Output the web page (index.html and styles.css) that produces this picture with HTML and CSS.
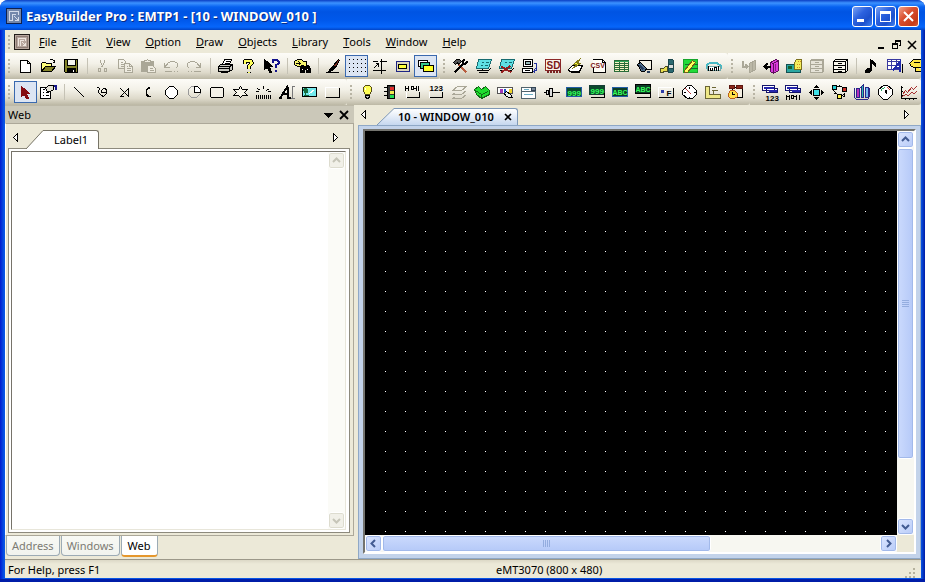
FILE: index.html
```html
<!DOCTYPE html>
<html lang="en">
<head>
<meta charset="utf-8">
<title>EasyBuilder Pro</title>
<link rel="stylesheet" href="styles.css">
</head>
<body>
<div class="window">
<header class="titlebar">
  <svg class="appicon" viewBox="-.5 -.5 16 16" aria-hidden="true"><rect x="0" y="0" width="15" height="15" rx="1" fill="#7487ab" stroke="#10214e"/><path d="M3 12V3H12V6M6 12V6H9M3 12H6M8 8L12 12M12 8V12H8" stroke="#d5dbea" stroke-width="1.4"/></svg>
  <h1>EasyBuilder Pro : EMTP1 - [10 - WINDOW_010 ]</h1>
  <button class="cap" aria-label="Minimize"><svg viewBox="0 0 19 19"><path d="M4 13.5H11" stroke="#fff" stroke-width="3"/></svg></button>
  <button class="cap" aria-label="Maximize"><svg viewBox="0 0 19 19"><path d="M4.5 4V14.5H14.5V4M4 5.5H15" stroke="#fff" /><path d="M4 5H15" stroke="#fff" stroke-width="3"/></svg></button>
  <button class="cap close" aria-label="Close"><svg class="smooth" viewBox="0 0 19 19"><path d="M5 5L14 14M14 5L5 14" stroke="#fff" stroke-width="2"/></svg></button>
</header>

<nav class="menubar">
  <span class="grip"></span>
  <svg class="appicon" viewBox="-.5 -.5 16 16" aria-hidden="true"><rect x="0" y="0" width="15" height="15" rx="1" fill="#b8a79e" stroke="#211c18"/><rect x="2" y="2" width="11" height="11" stroke="#8d7c75"/><path d="M4 11V4H11V6M6 11V6H9M8 8L11 11M11 8V11H8" stroke="#eee5df" stroke-width="1.3"/></svg>
  <button><u>F</u>ile</button><button><u>E</u>dit</button><button><u>V</u>iew</button><button><u>O</u>ption</button><button><u>D</u>raw</button><button><u>O</u>bjects</button><button><u>L</u>ibrary</button><button><u>T</u>ools</button><button><u>W</u>indow</button><button><u>H</u>elp</button>
  <span class="docbuttons">
    <button aria-label="Minimize document"><svg viewBox="0 0 10 10"><path d="M1 8H7" stroke-width="2"/></svg></button>
    <button aria-label="Restore document"><svg viewBox="-.5 -.5 10 10"><path d="M3 3V0H8V5H6M3 1H8M0 3H5V8H0ZM0 4H5"/></svg></button>
    <button aria-label="Close document"><svg class="smooth" viewBox="0 0 10 10"><path d="M1 1L9 9M9 1L1 9" stroke-width="1.6"/></svg></button>
  </span>
</nav>

<div class="toolrow">
  <div class="toolbar" role="toolbar" aria-label="Standard">
    <span class="grip"></span>
    <button class="tool" aria-label="New"><svg viewBox="-.5 -.5 21 20"><path fill="#fff" d="M5 4H12L15 7V16H5ZM12 4V7H15"/></svg></button>
    <button class="tool" aria-label="Open"><svg viewBox="-.5 -.5 21 20"><path fill="#ffff7b" d="M3 15V7L4 6H7L8 7H13V10H7L3 15"/><path fill="#84842a" d="M3 15L7 10H17L13 15Z"/><path d="M11 4L12 3H14L16 5M16 3V6H14"/></svg></button>
    <button class="tool" aria-label="Save"><svg viewBox="-.5 -.5 21 20"><path fill="#84842a" d="M3 3H16V16H4L3 15Z"/><path fill="#f4f4ee" d="M6 3H14V9H6Z"/><path fill="#000" d="M6 12H14V16H6Z"/><path stroke="#fff" d="M12 13V15M15 4V4"/></svg></button>
    <span class="sep"></span>
    <button class="tool off" aria-label="Cut" disabled><svg viewBox="-.5 -.5 21 20"><path d="M8 3V6L11 11M12 3V6L9 11M6 12H8V15H6ZM12 12H14V15H12Z"/></svg></button>
    <button class="tool off" aria-label="Copy" disabled><svg viewBox="-.5 -.5 21 20"><path d="M3 3H8L10 5V12H3ZM5 6H7M5 8H8M5 10H8"/><path fill="#eeebe0" d="M9 7H14L17 10V16H9ZM14 7V10H17M11 10H12M11 12H15M11 14H15"/></svg></button>
    <button class="tool off" aria-label="Paste" disabled><svg viewBox="-.5 -.5 21 20"><path fill="#aaa797" d="M3 5H15V15H3Z"/><path fill="#eeebe0" d="M6 6V4H8L9 3L10 4H12V6ZM9 9H14L17 12V16H9ZM11 12H14M11 14H15"/></svg></button>
    <button class="tool off" aria-label="Undo" disabled><svg viewBox="-.5 -.5 21 20"><path d="M3 6V11H8M3 11L7 6L10 5H13L16 7V10L14 12M3 15H10M12 15H13M15 15H16"/></svg></button>
    <button class="tool off" aria-label="Redo" disabled><svg viewBox="-.5 -.5 21 20"><path d="M16 6V11H11M16 11L12 6L9 5H6L3 7V10L5 12M3 15H4M6 15H7M9 15H16"/></svg></button>
    <span class="sep"></span>
    <button class="tool" aria-label="Print"><svg viewBox="-.5 -.5 21 20"><path fill="#fff" d="M7 8L9 3H16L14 8Z"/><path d="M10 5H14M9 7H13"/><path fill="#c8c8c0" d="M3 10L5 8H17L15 10ZM3 10H14V15H3ZM14 10L17 8V13L14 15"/><path stroke="#e5dd25" d="M9 12H11"/><path d="M3 12H14M5 16H12L14 14" /></svg></button>
    <button class="tool" aria-label="Help"><svg viewBox="-.5 -.5 21 20"><path stroke-width="4" d="M6 7V5L8 4H12L13 6V7L10 10V12M10 15V16"/><path stroke="#ffff5a" stroke-width="2" d="M6 7V5L8 4H12L13 6V7L10 10V12M10 15V16"/></svg></button>
    <button class="tool" aria-label="Context help"><svg viewBox="-.5 -.5 21 20"><path fill="#000" d="M3 3V13L6 11L8 16H10L8 10H11Z"/><path stroke="#12128c" stroke-width="2" d="M11 6V4L13 3H15L17 5V7L14 9V11M14 13V15"/></svg></button>
    <span class="sep"></span>
    <button class="tool" aria-label="Find"><svg viewBox="-.5 -.5 21 20"><path fill="#f5f36c" d="M2 5L5 3H9L11 5H14V10H5L2 8Z"/><path d="M3 7H8L6 5M8 7L6 9"/><path fill="#000" d="M9 9H11V11H14V9H16L18 12V16H14V13H12V16H8V12Z"/><path stroke="#fff" d="M10 12V13M15 12V13"/></svg></button>
    <span class="sep"></span>
    <button class="tool" aria-label="Pen"><svg viewBox="-.5 -.5 21 20"><path d="M2 16H15"/><path fill="#7c2d20" d="M10 9L15 3L16 4L12 11Z"/><path fill="#000" d="M10 9L12 11L9 14L5 15L8 11Z"/></svg></button>
    <button class="tool on" aria-label="Grid"><svg viewBox="-.5 -.5 21 20"><g stroke-dasharray="1 3"><path d="M2 3H19M2 7H19M2 11H19M2 15H19"/></g></svg></button>
    <button class="tool" aria-label="Snap"><svg viewBox="-.5 -.5 21 20"><path d="M3 5H8M10 5H17M12 2V17M3 14H16M4 12L9 7M6 7H9V10"/></svg></button>
    <button class="tool" aria-label="Frame"><svg viewBox="-.5 -.5 21 20"><path fill="#ded8bd" stroke="#1d2485" d="M4 5H17V15H4Z"/><path fill="#ffff3c" d="M6 8H14V12H6Z"/></svg></button>
    <button class="tool on" aria-label="Overlap"><svg viewBox="-.5 -.5 21 20"><path fill="#fff" d="M3 4H12V10H3Z"/><path fill="#35c98b" d="M5 6H14V12H5Z"/><path fill="#ffff24" d="M8 9H18V15H8Z"/></svg></button>
  </div>
  <div class="toolbar" role="toolbar" aria-label="Project">
    <span class="grip"></span>
    <button class="tool" aria-label="System parameters"><svg viewBox="-.5 -.5 21 20"><path stroke="#b95e3f" stroke-width="2" d="M8 8L16 16"/><path fill="#555" d="M3 6L6 3H9L11 5L8 8L7 6L5 8Z"/><path stroke-width="2" d="M14 3L12 5L13 7H15L17 5M12 8L4 16"/></svg></button>
    <button class="tool" aria-label="Compile"><svg viewBox="-.5 -.5 21 20"><path fill="#5fe0e4" stroke="#176b70" d="M5 3H18L15 12H3Z"/><path stroke="#176b70" d="M8 6H10M12 6H15M7 9H9M11 9H14"/><path d="M9 12V14M3 14H15L17 12M5 16H14"/></svg></button>
    <button class="tool" aria-label="Stop"><svg viewBox="-.5 -.5 21 20"><path fill="#5fe0e4" stroke="#176b70" d="M5 3H18L15 12H3Z"/><path stroke="#176b70" d="M8 6H10M12 6H15"/><path d="M3 14H15L17 12"/><path stroke="#942020" stroke-width="2" d="M5 10L15 16M14 9L5 16"/></svg></button>
    <button class="tool" aria-label="Download"><svg viewBox="-.5 -.5 21 20"><path fill="#fff" d="M4 3H13V10H4ZM3 12H13V16H3Z"/><path fill="#9bb" d="M6 5H11V8H6Z"/><path stroke="#2733a1" d="M14 7H17V14L14 15M16 12L14 15L16 16"/><path d="M5 14H10"/></svg></button>
    <button class="tool" aria-label="SD card"><svg viewBox="-.5 -.5 21 20"><rect x="3" y="3" width="15" height="11" stroke="#8c2828" fill="#f9f3e9"/><path stroke="#7a2222" stroke-dasharray="2 1" stroke-width="3" d="M4 15H18"/><text x="4" y="12" class="t10 red">SD</text></svg></button>
    <button class="tool" aria-label="Lightning"><svg viewBox="-.5 -.5 21 20"><path fill="#fff" d="M3 13L7 9H17L14 15H4Z"/><path d="M5 16H14"/><path fill="#ffff3a" stroke="#807a18" d="M15 2L8 8H11L7 12L15 7H12Z"/></svg></button>
    <button class="tool" aria-label="CSV"><svg viewBox="-.5 -.5 21 20"><path fill="#fffdf5" d="M4 3H14L17 6V16H5V10"/><path d="M14 3V6H17"/><text x="2" y="11" class="t7 red">CSV</text></svg></button>
    <button class="tool" aria-label="Table"><svg viewBox="-.5 -.5 21 20"><path fill="#f7f3c3" stroke="#286b38" d="M3 4H17V15H3ZM3 7H17M3 9H17M3 11H17M3 13H17M8 4V15M13 4V15"/><path stroke="#31a65b" d="M3 5H17"/></svg></button>
    <button class="tool" aria-label="Screen"><svg viewBox="-.5 -.5 21 20"><path fill="#f6f4e6" d="M5 4H17V13H9L5 9Z"/><path fill="#51718e" d="M3 8L6 6L12 12L10 15H7Z"/><path stroke="#283d5b" stroke-width="2" d="M5 9L9 13M12 15H15"/></svg></button>
    <button class="tool" aria-label="USB"><svg viewBox="-.5 -.5 21 20"><path fill="#2a6870" stroke="#1b474d" d="M11 3H15L16 4V15L15 16H11Z"/><path fill="#d8dddd" stroke="#1b474d" d="M11 8H16V12H11Z"/><path fill="#e8de4e" stroke="#4c4a24" d="M3 12H6L8 10H10V15H7L5 16H3Z"/></svg></button>
    <button class="tool" aria-label="Edit green"><svg viewBox="-.5 -.5 21 20"><path fill="#20db38" stroke="#16a52b" d="M3 3H17V16H3Z"/><path stroke="#146b2b" d="M4 8H17M4 12H17"/><path fill="#ffff5b" stroke="#706018" d="M4 14L12 4L15 6L7 16H4Z"/></svg></button>
    <button class="tool" aria-label="Station"><svg viewBox="-.5 -.5 21 20"><path stroke="#48b9c4" stroke-width="2" d="M3 12V9L7 6H13L17 9V12"/><path fill="#fff" stroke="#76a7a8" d="M4 10H17V14H4Z"/><path d="M5 9V14M7 11V14H9V11M11 14V11H13V14M15 9V14"/></svg></button>
  </div>
  <div class="toolbar grow" role="toolbar" aria-label="Libraries">
    <span class="grip"></span>
    <button class="tool off" aria-label="Import" disabled><svg viewBox="-.5 -.5 21 20"><path fill="#bbb8a7" d="M11 7L14 5V15L11 16ZM14 5L17 4V13L14 15"/><path stroke-width="2" d="M4 4V10H9M7 8L9 10L7 12"/></svg></button>
    <button class="tool" aria-label="Export"><svg viewBox="-.5 -.5 21 20"><path fill="#d93bdc" stroke="#5c0d5c" d="M9 6L14 3L17 4V14L12 17L9 15ZM9 6L12 7V17M12 7L17 4"/><path stroke="#8d168d" d="M14 7V14"/><path stroke-width="2" d="M9 10H3M6 7L3 10L6 13"/></svg></button>
    <button class="tool" aria-label="Picture library"><svg viewBox="-.5 -.5 21 20"><path fill="#2aa6a1" stroke="#134f52" d="M2 8H16V16H2Z"/><path fill="#13602d" stroke="#13602d" d="M4 10H7V12H4Z"/><path fill="#f4ee5c" stroke="#7c701f" d="M12 3H17V13H10V6Z"/><path stroke="#d18b25" stroke-dasharray="1 1" d="M13 5H16M12 8H16M12 11H16"/></svg></button>
    <button class="tool off" aria-label="Cabinet" disabled><svg viewBox="-.5 -.5 21 20"><path fill="#e6e3d8" d="M3 4L5 3H16V14L15 16H3ZM3 4H15V16M3 8H15M3 12H15M7 6H11M7 10H11M7 14H11"/></svg></button>
    <button class="tool" aria-label="Archive"><svg viewBox="-.5 -.5 21 20"><path fill="#f8f6ec" d="M3 5L5 3H17V14L15 16H3ZM3 5H15V16M3 9H15M3 13H15M7 7H11M7 11H11M7 15H11M15 5L17 3"/></svg></button>
    <span class="sep"></span>
    <button class="tool" aria-label="Sound"><svg viewBox="-.5 -.5 21 20"><path fill="#000" d="M9 3V12H6L4 14V16H8L10 14V6L14 10V7Z"/></svg></button>
    <button class="tool" aria-label="Tag table"><svg viewBox="-.5 -.5 21 20"><path fill="#fff" stroke="#3939a0" d="M3 3H16V13H3ZM3 5H16M3 9H16M7 3V13M12 3V13"/><path stroke="#202aab" stroke-width="2" d="M8 14L15 6V15M11 11H15"/><path d="M18 7V16"/></svg></button>
    <button class="tool" aria-label="Label"><svg viewBox="-.5 -.5 21 20"><path fill="#ffe745" d="M2 7L6 3H20V11H7L4 10ZM8 11V15H20"/><path d="M6 6H12"/></svg></button>
  </div>
</div>

<div class="toolrow">
  <div class="toolbar" role="toolbar" aria-label="Draw">
    <span class="grip"></span>
    <button class="tool on" aria-label="Select"><svg viewBox="-.5 -.5 21 20"><path fill="#850d13" stroke="#850d13" d="M6 4V14L9 12L11 16H13L11 11H14Z"/></svg></button>
    <button class="tool" aria-label="Properties"><svg viewBox="-.5 -.5 21 20"><path fill="#fff" d="M2 5H12V16H2Z"/><path d="M4 7H6M4 10H5M7 10H10M4 13H5M7 13H10"/><path fill="#e5e2d7" d="M7 6L10 3H15V7L12 9H9Z"/><path stroke="#17178a" stroke-width="2" d="M15 3H17V7"/></svg></button>
    <span class="sep"></span>
    <button class="tool" aria-label="Line"><svg viewBox="-.5 -.5 21 20"><path d="M5 5L15 15"/></svg></button>
    <button class="tool" aria-label="Curve"><svg viewBox="-.5 -.5 21 20"><path d="M4 5H6L7 6L6 9V10L9 13L11 14L14 11V8L13 6H11L9 8V10H13"/></svg></button>
    <button class="tool" aria-label="Polyline"><svg viewBox="-.5 -.5 21 20"><path d="M5 6L13 14V6L5 14H8"/></svg></button>
    <button class="tool" aria-label="Arc"><svg viewBox="-.5 -.5 21 20"><path stroke-width="1.6" d="M12 5L9 6L8 8V12L10 14H12"/></svg></button>
    <button class="tool" aria-label="Ellipse"><svg viewBox="-.5 -.5 21 20"><path fill="#fff" d="M8 4H12L16 8V12L12 16H8L4 12V8Z"/></svg></button>
    <button class="tool" aria-label="Pie"><svg viewBox="-.5 -.5 21 20"><path stroke="#999" d="M10 4H7L4 7V12L7 15H12L16 11"/><path fill="#fff" d="M10 4H13L16 7V10H10Z"/></svg></button>
    <button class="tool" aria-label="Rectangle"><svg viewBox="-.5 -.5 21 20"><path fill="#f4f1e8" d="M4 5H15L16 6V14L15 15H4L3 14V6Z"/></svg></button>
    <button class="tool" aria-label="Polygon"><svg viewBox="-.5 -.5 21 20"><path fill="#f8f5ea" d="M3 7H8L10 4L12 7H17L14 10L17 13H12L10 15L8 13H3L6 10Z"/></svg></button>
    <button class="tool" aria-label="Scale"><svg viewBox="-.5 -.5 21 20"><path d="M3 12V16M5 12V16M7 12V16M9 12V16M11 12V16M13 12V16M15 12V16M17 12V16M10 3V6M4 6L7 8M16 6L13 8M2 9H5M14 9H17"/></svg></button>
    <button class="tool" aria-label="Text"><svg viewBox="-.5 -.5 21 20"><path stroke-width="2" d="M2 15H5M4 15L11 4L12 15M10 15H14M7 11H12"/><path stroke="#777" d="M15 4H18M16 4V16M14 16H18"/></svg></button>
    <button class="tool" aria-label="Picture"><svg viewBox="-.5 -.5 21 20"><path fill="#73e9ec" d="M3 5H17V14H3Z"/><path fill="#176d3e" stroke="#176d3e" d="M4 7L6 6L8 7V10H5ZM6 10V13M4 13H9"/><path stroke="#fff" d="M10 11L15 7"/></svg></button>
    <button class="tool" aria-label="Panel"><svg viewBox="-.5 -.5 21 20"><path stroke="#fff" d="M3 14V5H15"/><path stroke-width="1.5" d="M3 15H17V5"/></svg></button>
  </div>
  <div class="toolbar" role="toolbar" aria-label="Objects">
    <span class="grip"></span>
    <button class="tool" aria-label="Bit lamp"><svg viewBox="-.5 -.5 21 20"><path fill="#ffff55" stroke="#554c16" d="M8 3H12L14 5V9L12 12H8L6 9V5Z"/><path fill="#bbb" d="M8 13H12V15L10 16L8 15Z"/><path stroke="#fff" d="M8 5V7"/></svg></button>
    <button class="tool" aria-label="Word lamp"><svg viewBox="-.5 -.5 21 20"><path fill="#333" d="M7 3H14V16H7Z"/><g stroke="none"><rect x="9" y="4" width="4" height="3" fill="#e02d2d"/><rect x="9" y="8" width="4" height="3" fill="#efe84e"/><rect x="9" y="12" width="4" height="3" fill="#20dd54"/></g><path d="M3 5H6M3 9H6M3 13H6"/></svg></button>
    <button class="tool" aria-label="Set bit"><svg viewBox="-.5 -.5 21 20"><path d="M2 3V8M2 6H5M5 3V8M8 4H10V7H8ZM10 6H13M13 3V8M15 3V8"/><path fill="#f9f7ef" stroke="#fff" d="M3 15V9"/><path d="M3 15H16V9"/></svg></button>
    <button class="tool" aria-label="Set word"><svg viewBox="-.5 -.5 21 20"><text x="3" y="8" class="t8">123</text><path stroke="#fff" d="M3 9V15"/><path stroke-width="1.5" d="M3 15H16V9"/></svg></button>
    <button class="tool off" aria-label="Layers" disabled><svg viewBox="-.5 -.5 21 20"><path d="M3 8L8 4H17L12 8ZM3 12L6 10M17 8L12 12H3M3 16L6 14M17 12L12 16H3"/></svg></button>
    <button class="tool" aria-label="Toggle switch"><svg viewBox="-.5 -.5 21 20"><path fill="#20de2f" stroke="#126916" d="M2 7L6 4L9 7L13 4L17 8V12L9 16L4 12Z"/><path stroke="#126916" d="M3 8L9 12L16 9M9 12V16"/></svg></button>
    <button class="tool" aria-label="Multi-state"><svg viewBox="-.5 -.5 21 20"><path fill="#fff" stroke="#555" d="M2 5H17V11H2Z"/><g stroke="none"><rect x="4" y="6" width="3" height="4" fill="#a238b8"/><rect x="8" y="6" width="2" height="4" fill="#1f52c2"/><rect x="13" y="6" width="3" height="4" fill="#efd327"/></g><path fill="#eee" d="M9 11L11 9L15 12L17 15H13L10 13Z"/></svg></button>
    <button class="tool" aria-label="Option list"><svg viewBox="-.5 -.5 21 20"><path fill="#fff" stroke="#52636c" d="M3 5H17V16H3ZM3 9H17"/><path stroke="#6aadc3" d="M5 7H10M5 12H8M8 12H14"/><path fill="#789" stroke="#345" d="M13 5H17V8H13Z"/></svg></button>
    <button class="tool" aria-label="Slider"><svg viewBox="-.5 -.5 21 20"><path d="M2 10H18"/><path fill="#ddd" d="M8 6H11V14H8ZM5 8H7V12H5Z"/></svg></button>
    <button class="tool" aria-label="Numeric display"><svg viewBox="-.5 -.5 21 20"><rect x="2" y="5" width="15" height="9" fill="#0c4a2c" stroke="#235ca5"/><text x="3" y="13" class="t8 neon">999</text></svg></button>
    <button class="tool" aria-label="Numeric input"><svg viewBox="-.5 -.5 21 20"><rect x="2" y="3" width="15" height="9" fill="#0c4a2c" stroke="#163d35"/><text x="3" y="11" class="t8 neon">999</text><path d="M3 15H17V10"/></svg></button>
    <button class="tool" aria-label="Text display"><svg viewBox="-.5 -.5 21 20"><rect x="2" y="5" width="15" height="9" fill="#0c3d24" stroke="#235ca5"/><text x="2" y="12" class="t7 neon">ABC</text></svg></button>
    <button class="tool" aria-label="Text input"><svg viewBox="-.5 -.5 21 20"><rect x="2" y="2" width="15" height="9" fill="#0c3d24"/><text x="2" y="9" class="t7 neon">ABC</text><path d="M3 15H17V10"/></svg></button>
    <button class="tool" aria-label="Function key"><svg viewBox="-.5 -.5 21 20"><path stroke="#fff" d="M2 14V5H15"/><path stroke-width="1.5" d="M2 15H17V5"/><path stroke="#2c3ba8" stroke-width="3" d="M4 9H7"/><text x="10" y="13" class="t8">F</text></svg></button>
    <button class="tool" aria-label="Meter"><svg viewBox="-.5 -.5 21 20"><path fill="#fff" d="M8 3H12L17 8V12L13 16H8L3 12V8Z"/><path d="M10 4V6M4 10H6M14 10H16M10 14V16"/><path stroke="#b73434" d="M6 6L12 12"/></svg></button>
    <button class="tool" aria-label="Bar graph"><svg viewBox="-.5 -.5 21 20"><path stroke="#6a6535" stroke-width="5" d="M5 3V14H18"/><path stroke="#eee887" stroke-width="3" d="M5 4V14H17"/><path stroke="#6a6535" d="M9 5H13M9 8H15M11 8V11"/></svg></button>
    <button class="tool" aria-label="Scheduler"><svg viewBox="-.5 -.5 21 20"><path fill="#f4efe2" d="M7 5H17V15H9Z"/><path fill="#8e291c" stroke="#5d1810" d="M4 3H9V6H4ZM11 3H17V6H11Z"/><path fill="#ffdf48" stroke="#bb5e1c" d="M5 8H9L12 11V14L9 16H5L3 14V11Z"/><path d="M7 9V12H9"/></svg></button>
  </div>
  <div class="toolbar grow" role="toolbar" aria-label="Data">
    <span class="grip"></span>
    <button class="tool" aria-label="Indirect numeric"><svg viewBox="-.5 -.5 21 20"><path fill="#fff" stroke="#15156b" d="M2 3H14V8H2ZM6 6H17V10H6Z"/><path stroke="#2525ad" stroke-width="2" d="M3 5H13M8 8H16"/><text x="5" y="18" class="t8">123</text></svg></button>
    <button class="tool" aria-label="Indirect bit"><svg viewBox="-.5 -.5 21 20"><path fill="#fff" stroke="#15156b" d="M2 3H14V8H2ZM6 6H17V10H6Z"/><path stroke="#2525ad" stroke-width="2" d="M3 5H13M8 8H16"/><path d="M3 12V17M3 14H6M6 12V17M8 13H10V16H8ZM10 14H13M13 12V17M16 12V17"/></svg></button>
    <button class="tool" aria-label="Moving shape"><svg viewBox="-.5 -.5 21 20"><path fill="#3fe0e6" d="M7 7H13V13H7Z"/><path fill="#000" d="M8 5L10 3L12 5ZM8 15L10 17L12 15ZM5 8L3 10L5 12ZM15 8L17 10L15 12Z"/></svg></button>
    <button class="tool" aria-label="Animation"><svg viewBox="-.5 -.5 21 20"><path fill="#24cbd1" d="M3 3H7V7H3Z"/><path fill="#ca3029" d="M13 5H17V9H13Z"/><path fill="#fff346" d="M8 12H12V16H8Z"/><path d="M7 4H12M10 3L12 5M15 10V14H13M4 8L8 12M4 11H7M14 12L12 14"/></svg></button>
    <button class="tool" aria-label="Trend bars"><svg viewBox="-.5 -.5 21 20"><path fill="#b52dbd" stroke="#262688" d="M4 6H7V15H4Z"/><path fill="#2abda8" stroke="#262688" d="M9 4L11 2V15H9Z"/><path fill="#73b7ef" stroke="#262688" d="M13 5H16V15H13Z"/><path stroke="#262688" d="M2 5V15L4 17H15L17 14V5M7 6L9 4"/></svg></button>
    <button class="tool" aria-label="Gauge"><svg viewBox="-.5 -.5 21 20"><path fill="#fff" d="M8 3H12L17 7V12L12 17H8L3 12V7Z"/><path stroke="#25a05c" d="M5 9L7 6L10 5"/><path stroke="#d04a37" d="M12 5L15 8"/><path stroke-width="2" d="M10 11L11 8"/></svg></button>
    <button class="tool" aria-label="Trend chart"><svg viewBox="-.5 -.5 21 20"><path d="M3 3V16H18M2 5H4M2 9H4M2 13H4M7 15V17M11 15V17M15 15V17"/><path stroke="#a93232" d="M4 12L7 8L9 10L13 5L15 7L18 4M4 14L7 12L10 13L13 10L16 11L18 9"/></svg></button>
  </div>
</div>

<main class="workspace">
  <aside class="dock">
    <header class="dockhead"><h2>Web</h2>
      <button aria-label="Panel menu"><svg viewBox="0 0 10 10"><path fill="#000" stroke="none" d="M0 3H10L5 8Z"/></svg></button>
      <button aria-label="Close panel"><svg class="smooth" viewBox="0 0 10 10"><path d="M1 1L9 9M9 1L1 9" stroke-width="1.8"/></svg></button>
    </header>
    <div class="dockframe">
      <div class="strip">
        <button class="arrow" aria-label="Previous label"><svg viewBox="-.5 -.5 6 10"><path fill="#fff" d="M4 0V8L0 4Z"/></svg></button>
        <button class="tab plain"><svg class="slant" viewBox="0 0 18 19"><path fill="#fff" stroke="none" d="M0 19L17 1H18V19Z"/><path stroke="#777467" d="M0 19L17 .5H18"/></svg><span>Label1</span></button>
        <button class="arrow last" aria-label="Next label"><svg viewBox="-.5 -.5 6 10"><path fill="#fff" d="M0 0V8L4 4Z"/></svg></button>
      </div>
      <div class="listframe"><div class="list">
        <div class="vscroll idle">
          <button disabled aria-label="Scroll list up"><svg class="smooth" viewBox="0 0 9 9"><path d="M1 6L4.500 2.500L8 6"/></svg></button>
          <button disabled aria-label="Scroll list down"><svg class="smooth" viewBox="0 0 9 9"><path d="M1 3L4.500 6.500L8 3"/></svg></button>
        </div>
      </div></div>
    </div>
    <div class="docktabs"><button>Address</button><button>Windows</button><button class="current">Web</button></div>
  </aside>

  <section class="editor">
    <div class="strip">
      <button class="arrow" aria-label="Previous window"><svg viewBox="-.5 -.5 6 10"><path fill="#fff" d="M4 0V8L0 4Z"/></svg></button>
      <div class="tab blue"><svg class="slant" viewBox="0 0 18 17" aria-hidden="true"><defs><linearGradient id="tabfill" x2="0" y2="1"><stop stop-color="#fff"/><stop offset="1" stop-color="#c6d7ef"/></linearGradient></defs><path fill="url(#tabfill)" stroke="none" d="M0 17L17 1H18V17Z"/><path stroke="#7d98b8" d="M0 17L17 .5H18"/></svg><span>10 - WINDOW_010<button aria-label="Close window"><svg class="smooth" viewBox="0 0 8 8"><path d="M1 1L7 7M7 1L1 7" stroke-width="1.6"/></svg></button></span></div>
      <button class="arrow last" aria-label="Next window"><svg viewBox="-.5 -.5 6 10"><path fill="#fff" d="M0 0V8L4 4Z"/></svg></button>
    </div>
    <div class="frame"><div class="view">
      <svg class="canvas" aria-label="Design canvas"><defs><pattern id="grid" x="20" y="20" width="20" height="20" patternUnits="userSpaceOnUse"><rect width="1" height="1" fill="#fff" stroke="none"/></pattern></defs><rect x="20" y="20" width="100%" height="100%" fill="url(#grid)" stroke="none"/></svg>
      <div class="vscroll">
        <button aria-label="Scroll up"><svg class="smooth" viewBox="0 0 9 9"><path d="M1 6L4.500 2.500L8 6"/></svg></button>
        <span class="track"><span class="thumb"></span></span>
        <button aria-label="Scroll down"><svg class="smooth" viewBox="0 0 9 9"><path d="M1 3L4.500 6.500L8 3"/></svg></button>
      </div>
      <div class="hscroll">
        <button aria-label="Scroll left"><svg class="smooth" viewBox="0 0 9 9"><path d="M6 1L2.500 4.500L6 8"/></svg></button>
        <span class="track"><span class="thumb"></span></span>
        <button aria-label="Scroll right"><svg class="smooth" viewBox="0 0 9 9"><path d="M3 1L6.500 4.500L3 8"/></svg></button>
      </div>
    </div></div>
  </section>
</main>

<footer class="status">
  <span>For Help, press F1</span><span>eMT3070 (800 x 480)</span>
  <svg class="sizer" viewBox="0 0 12 12" aria-hidden="true"><path stroke="#b5b19d" stroke-width="2" stroke-dasharray="2 2" d="M8 3H10M4 7H10M0 11H10"/></svg>
</footer>
</div>
</body>
</html>
```
FILE: styles.css
```css
* { box-sizing: border-box; }
body {
  margin: 0;
  background: #fff;
  color: #000;
  font: 11px/14px "Noto Sans", "Open Sans", sans-serif;
}
h1, h2 { margin: 0; font-size: inherit; font-weight: inherit; }
button {
  display: flex;
  align-items: center;
  justify-content: center;
  padding: 0;
  border: 0;
  background: none;
  color: inherit;
  font: inherit;
  flex: none;
}
svg { display: block; flex: none; fill: none; stroke: #000; shape-rendering: crispEdges; }
.smooth, .slant { shape-rendering: auto; }
svg text { stroke: none; fill: #000; font-family: "Liberation Sans", sans-serif; font-weight: bold; }
.t7 { font-size: 7px; }
.t8 { font-size: 8px; }
.t10 { font-size: 10px; }
svg .red { fill: #7d1717; }
svg .neon { fill: #35ff5b; }

.window {
  display: flex;
  flex-direction: column;
  height: 100vh;
  min-height: 360px;
  padding: 0 4px 4px 5px;
  border-radius: 8px 8px 0 0;
  background: linear-gradient(90deg, #0019cf, #0855e5 4px, #0855e5 calc(100% - 4px), #001ba5);
  box-shadow: inset 0 -3px #001da8;
}

/* Title bar */
.titlebar {
  display: flex;
  align-items: center;
  flex: none;
  gap: 2px;
  height: 30px;
  margin: 0 -4px 0 -5px;
  padding: 2px 6px 0;
  border-radius: 8px 8px 0 0;
  background: linear-gradient(#0a3ec4, #3c92ff 3px, #0661f0 7px, #0054e3 12px, #0058eb 20px, #0666fb 27px, #0144c6);
}
.titlebar h1 {
  flex: 1;
  margin-left: 2px;
  color: #fff;
  font-size: 13px;
  font-weight: 700;
  text-shadow: 1px 1px #0a2a80;
}
.appicon { width: 16px; height: 16px; }
.cap {
  width: 21px;
  height: 21px;
  border: 1px solid #fff;
  border-radius: 3px;
  background: linear-gradient(135deg, #7ba3f3, #2c62df 40%, #1c50cc 70%, #3f83f2);
}
.cap svg { width: 19px; height: 19px; }
.close { background: linear-gradient(135deg, #f1a28c, #da5030 40%, #c63a18 80%, #d55a38); }

/* Menu bar */
.menubar {
  display: flex;
  align-items: center;
  flex: none;
  height: 23px;
  background: #ece9d8;
}
.menubar > button { margin-left: 15px; }
.menubar .appicon + button { margin-left: 9px; }
.docbuttons { display: flex; gap: 5px; margin: 6px 4px 0 auto; }
.docbuttons button { margin: 0; }
.docbuttons svg { width: 10px; height: 10px; }
.grip {
  flex: none;
  width: 9px;
  height: 16px;
  background: repeating-linear-gradient(#b8b4a4 0 2px, transparent 2px 4px) 3px 1px / 2px 14px no-repeat;
}

/* Toolbars */
.toolrow {
  display: flex;
  flex: none;
  height: 26px;
  background: #e6e3d4;
  overflow: hidden;
}
.toolbar {
  display: flex;
  align-items: center;
  flex: none;
  padding-right: 3px;
  border-radius: 0 3px 3px 0;
  background: linear-gradient(#fdfcf8, #f3f1e8 40%, #dedacb 75%, #bcb8a5);
}
.grow { flex: 1 0 0; min-width: 0; padding: 0; overflow: hidden; }
.tool { width: 23px; height: 22px; }
.tool svg { width: 21px; height: 20px; }
.on { box-shadow: inset 0 0 0 1px #3a69ae; background: #dce5f3; }
.off svg { stroke: #aaa797; }
.sep { flex: none; width: 1px; height: 16px; margin: 0 3px 0 4px; background: #c5c2b5; }

/* Workspace */
.workspace {
  display: grid;
  grid-template-columns: minmax(200px, 349px) minmax(0, 1fr);
  gap: 4px;
  flex: 1;
  min-height: 0;
  background: #ece9d8;
}
.dock, .editor { display: flex; flex-direction: column; min-width: 0; min-height: 0; }
.dockhead {
  display: flex;
  align-items: center;
  flex: none;
  gap: 6px;
  height: 18px;
  padding: 0 5px 0 3px;
  border-top: 1px solid #bdb9a8;
  background: #cbc8b9;
}
.dockhead h2 { flex: 1; }
.dockhead svg { width: 10px; height: 10px; }
.dockframe {
  display: flex;
  flex: 1;
  flex-direction: column;
  min-height: 0;
  padding: 4px 3px 2px 2px;
  border: 1px solid #aca899;
  border-left-color: #fff;
}
.strip { display: flex; align-items: center; flex: none; height: 20px; }
.arrow { width: 11px; height: 16px; }
.arrow svg { width: 6px; height: 10px; }
.dockframe .arrow { width: 16px; }
.last { margin-left: auto; }
.tab { display: flex; align-self: flex-end; align-items: stretch; }
.tab span { display: flex; align-items: center; border: 1px solid #777467; border-width: 1px 1px 0 0; border-radius: 0 3px 0 0; }
.plain { position: relative; z-index: 1; height: 19px; margin: 0 0 -1px 2px; }
.plain .slant { width: 18px; height: 19px; }
.plain span { padding: 0 10px; background: #fff; }
.dockframe .last { margin-right: 6px; }
.listframe { display: flex; flex: 1; min-height: 0; padding: 2px 3px 2px 2px; border: 1px solid #8d8a7d; background: #fff; }
.list {
  display: flex;
  flex: 1;
  justify-content: flex-end;
  border: 1px solid #76736a;
  border-right-color: #e8e6da;
  border-bottom-color: #e8e6da;
  background: #fff;
}
.docktabs { display: flex; align-items: flex-start; flex: none; height: 23px; padding-left: 1px; }
.docktabs button {
  height: 20px;
  margin-right: 1px;
  padding: 0 5px;
  border: 1px solid #9cabb5;
  border-top: 0;
  border-radius: 0 0 4px 4px;
  background: linear-gradient(#f8f9f4, #f1f3ee);
  color: #7c7b73;
}
.docktabs .current { height: 21px; padding: 0 6px; border-bottom: 2px solid #e5972d; background: #fff; color: #000; }

.editor .strip { height: 20px; }
.blue { height: 17px; margin-left: 8px; }
.blue .slant { width: 18px; height: 17px; }
.blue span { gap: 10px; padding: 0 5px 0 3px; border-color: #7d98b8; background: linear-gradient(#fff, #c6d7ef); font-weight: 600; }
.blue button svg { width: 8px; height: 8px; }
.editor .last { margin-right: 9px; }
.frame { display: flex; flex: 1; min-height: 0; padding: 3px 4px 4px; border: 1px solid #8fa8c6; background: #c3d3ea; }
.view {
  display: grid;
  flex: 1;
  grid-template: minmax(0, 1fr) 17px / minmax(0, 1fr) 17px;
  border: 2px solid #fff;
  border-top-color: #74746f;
  border-left-color: #74746f;
  background: #ece9d8;
}
.canvas { width: 100%; height: 100%; background: #000; }

/* Scroll bars */
.vscroll, .hscroll { display: flex; background: #f7f7f1; }
.vscroll { flex-direction: column; width: 17px; }
.vscroll button, .hscroll button {
  width: 17px;
  height: 17px;
  border: 1px solid #fff;
  border-radius: 3px;
  box-shadow: inset 0 0 0 1px #a2b9ea;
  background: linear-gradient(135deg, #dce6ff, #b8cbf8);
}
.vscroll svg, .hscroll svg { width: 9px; height: 9px; stroke: #425b92; stroke-width: 2; }
.track { display: flex; flex: 1; }
.thumb {
  display: block;
  border: 1px solid #fff;
  border-radius: 3px;
  box-shadow: inset 0 0 0 1px #a2b9ea;
  background-color: #c3d4fd;
}
.vscroll .track { flex-direction: column; }
.vscroll .thumb {
  width: 17px;
  height: 84%;
  background-image: repeating-linear-gradient(#94addf 0 1px, transparent 1px 2px), linear-gradient(90deg, #cbdafd, #b5c9f8);
  background-size: 7px 7px, auto;
  background-position: center;
  background-repeat: no-repeat;
}
.hscroll .thumb {
  width: 66%;
  height: 17px;
  background-image: repeating-linear-gradient(90deg, #94addf 0 1px, transparent 1px 2px), linear-gradient(#cbdafd, #b5c9f8);
  background-size: 7px 7px, auto;
  background-position: center;
  background-repeat: no-repeat;
}
.vscroll.idle { justify-content: space-between; background: #fbfbf7; }
.idle button { box-shadow: inset 0 0 0 1px #dddccf; background: #f1f0e8; }
.idle svg { stroke: #c6c5b8; }

/* Status bar */
.status {
  display: grid;
  grid-template-columns: 488px 1fr 14px;
  align-items: center;
  flex: none;
  height: 19px;
  padding: 2px 2px 0 3px;
  border-top: 1px solid #9c9889;
  background: linear-gradient(#dcd8c6, #ece9d8 4px);
}
.sizer { width: 12px; height: 12px; align-self: end; }
```
